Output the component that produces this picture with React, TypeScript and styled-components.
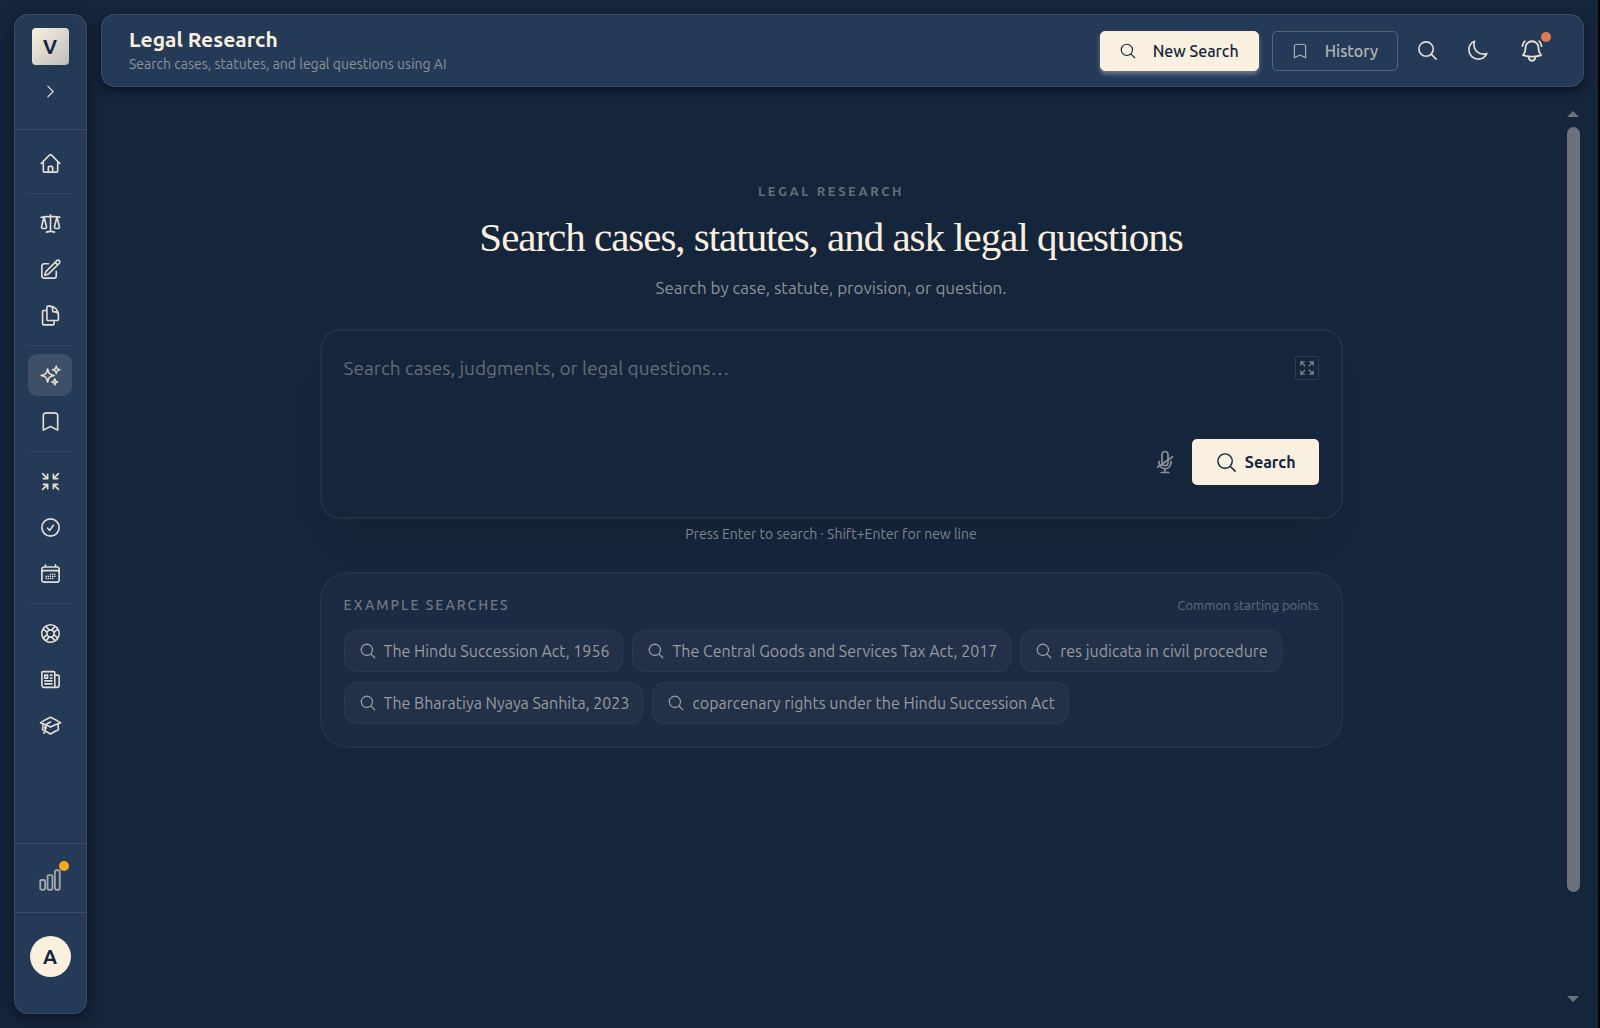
import React, { useState } from "react";
import styled, { createGlobalStyle, css } from "styled-components";
import {
  HiOutlineAcademicCap,
  HiOutlineArrowsPointingIn,
  HiOutlineArrowsPointingOut,
  HiOutlineBellAlert,
  HiOutlineBookmark,
  HiOutlineCalendarDays,
  HiOutlineChartBar,
  HiOutlineCheckCircle,
  HiOutlineChevronRight,
  HiOutlineDocumentDuplicate,
  HiOutlineHome,
  HiOutlineLifebuoy,
  HiOutlineMagnifyingGlass,
  HiOutlineMoon,
  HiOutlineNewspaper,
  HiOutlinePencilSquare,
  HiOutlineScale,
  HiOutlineSparkles,
} from "react-icons/hi2";

const color = {
  page: "#15253b",
  panel: "#253a57",
  cream: "#faf0e0",
  ink: "#16253b",
  line: "rgba(250, 240, 224, 0.1)",
  icon: "#e4dfd5",
  muted: "#8d929a",
  faint: "#646d79",
};

const GlobalStyle = createGlobalStyle`
  *, *::before, *::after { box-sizing: border-box; }
  body {
    margin: 0;
    background: ${color.page};
    color: ${color.cream};
    font-family: Ubuntu, "Noto Sans", "Open Sans", sans-serif;
    font-size: 16px;
  }
  button, textarea { font: inherit; color: inherit; }
  h1, h2, h3, p, ul { margin: 0; padding: 0; }
`;

const Shell = styled.div`
  display: flex;
  gap: 14px;
  height: 100vh;
  padding: 14px;
  border-right: 2px solid #000;
`;

const panel = css`
  background: ${color.panel};
  border: 1px solid ${color.line};
  border-radius: 14px;
`;

const Sidebar = styled.aside`
  ${panel}
  display: flex;
  flex-direction: column;
  flex: none;
  width: 73px;
  box-shadow: 0 4px 14px rgba(5, 10, 24, 0.6);
`;

const SidebarTop = styled.div`
  display: flex;
  flex-direction: column;
  align-items: center;
  gap: 12px;
  padding: 13px 1px 24px 0;
  border-bottom: 1px solid ${color.line};
`;

const Logo = styled.a`
  display: grid;
  place-items: center;
  width: 37px;
  height: 37px;
  border-radius: 4px;
  background: linear-gradient(135deg, ${color.cream}, #bdbdba);
  color: ${color.ink};
  font-size: 20px;
  font-weight: 600;
  line-height: 1;
  text-decoration: none;
`;

const PlainButton = styled.button<{ $size: number; $glyph: number; $tone?: string }>`
  position: relative;
  display: grid;
  place-items: center;
  width: ${(p) => p.$size}px;
  height: ${(p) => p.$size}px;
  padding: 0;
  border: 0;
  background: none;
  color: ${(p) => p.$tone ?? color.icon};
  cursor: pointer;

  svg {
    width: ${(p) => p.$glyph}px;
    height: ${(p) => p.$glyph}px;
    stroke-width: 1.7;
  }
`;

const Nav = styled.nav`
  display: flex;
  flex: 1;
  flex-direction: column;
  padding: 12px 14px 12px 13px;
`;

const NavGroup = styled.ul`
  display: flex;
  flex-direction: column;
  gap: 4px;
  list-style: none;

  & + & {
    margin-top: 9px;
    padding-top: 8px;
    border-top: 1px solid rgba(250, 240, 224, 0.07);
  }
`;

const NavLink = styled.a<{ $active: boolean }>`
  display: grid;
  place-items: center;
  height: 42px;
  border-radius: 9px;
  color: ${color.icon};
  background: ${(p) => (p.$active ? "rgba(250, 240, 224, 0.12)" : "none")};

  svg {
    width: 23px;
    height: 23px;
    stroke-width: 1.7;
  }
`;

const SidebarFoot = styled.div`
  display: grid;
  place-items: center;
  height: 69px;
  padding: 4px 2px 0 0;
  border-top: 1px solid ${color.line};
`;

const AccountFoot = styled(SidebarFoot)`
  height: 101px;
  padding: 0 1px 14px 0;
`;

const Dot = styled.span<{ $tone: string }>`
  position: absolute;
  top: 2px;
  right: 2px;
  width: 10px;
  height: 10px;
  border-radius: 50%;
  background: ${(p) => p.$tone};
`;

const Avatar = styled.button`
  width: 41px;
  height: 41px;
  padding: 0;
  border: 0;
  border-radius: 50%;
  background: ${color.cream};
  color: ${color.ink};
  font-size: 20px;
  font-weight: 600;
`;

const Column = styled.div`
  display: flex;
  flex: 1;
  flex-direction: column;
  min-width: 0;
`;

const Header = styled.header`
  ${panel}
  display: flex;
  align-items: center;
  justify-content: space-between;
  height: 73px;
  padding: 0 29px 0 27px;
  box-shadow: 0 4px 10px rgba(5, 10, 24, 0.6);
`;

const Title = styled.h1`
  font-size: 21px;
  font-weight: 600;
  line-height: 26px;
`;

const Tagline = styled.p`
  color: ${color.muted};
  font-size: 14px;
  line-height: 24px;
`;

const Actions = styled.div`
  display: flex;
  align-items: center;
  gap: 13px;
`;

const HeaderButton = styled.button<{ $primary?: boolean }>`
  display: flex;
  align-items: center;
  gap: 16px;
  height: 40px;
  padding: 0 19px 0 18px;
  border: 1px solid rgba(250, 240, 224, 0.22);
  border-radius: 5px;
  background: none;
  color: #b3b4b5;
  font-weight: 500;
  cursor: pointer;

  svg {
    width: 18px;
    height: 18px;
  }

  ${(p) =>
    p.$primary &&
    css`
      border-color: ${color.cream};
      background: ${color.cream};
      color: ${color.ink};
      box-shadow: 0 3px 4px rgba(250, 240, 224, 0.35);
    `}
`;

const IconBar = styled.div`
  display: flex;
  align-items: center;
  gap: 18px;
  padding-right: 1px;
`;

const Scroller = styled.div`
  display: flex;
  flex: 1;
  min-height: 0;
  padding: 24px 4px 0 0;
`;

const Content = styled.main`
  display: flex;
  flex: 1;
  flex-direction: column;
  align-items: center;
  padding: 70px 29px 0 24px;
`;

const Rail = styled.div`
  display: flex;
  flex-direction: column;
  align-items: center;
  width: 14px;
  padding-bottom: 12px;
  color: #6b727c;
`;

const Arrow = styled.span<{ $down?: boolean }>`
  width: 0;
  border: 6px solid transparent;
  border-top-width: ${(p) => (p.$down ? 6 : 0)}px;
  border-bottom-width: ${(p) => (p.$down ? 0 : 6)}px;
  border-${(p) => (p.$down ? "top" : "bottom")}-color: currentColor;
`;

const Track = styled.div`
  flex: 1;
  width: 13px;
  margin: 10px 0 9px;
`;

const Thumb = styled.div`
  height: 89%;
  border-radius: 7px;
  background: #6b727c;
`;

const Eyebrow = styled.p`
  color: ${color.faint};
  font-size: 13px;
  font-weight: 600;
  letter-spacing: 0.2em;
  line-height: 20px;
  text-transform: uppercase;
`;

const Headline = styled.h2`
  margin-top: 9px;
  font-family: "Liberation Serif", serif;
  font-size: 41px;
  font-weight: 400;
  letter-spacing: -0.025em;
  line-height: 54px;
`;

const Lead = styled.p`
  margin-top: 11px;
  color: ${color.muted};
  font-size: 17px;
  line-height: 26px;
`;

const SearchCard = styled.form`
  display: flex;
  flex-direction: column;
  width: 100%;
  max-width: 1023px;
  height: 190px;
  margin-top: 28px;
  padding: 25px 22px 32px;
  border: 2px solid rgba(250, 240, 224, 0.06);
  border-radius: 20px;
  box-shadow: 0 28px 28px -24px rgba(16, 32, 46, 0.6);
`;

const Row = styled.div`
  display: flex;
  align-items: flex-start;
  justify-content: space-between;
  flex: 1;
`;

const Query = styled.textarea`
  flex: 1;
  height: 72px;
  padding: 0;
  border: 0;
  outline: 0;
  background: none;
  resize: none;
  font-size: 19px;
  line-height: 24px;

  &::placeholder {
    color: ${color.faint};
    opacity: 1;
  }
`;

const ExpandButton = styled(PlainButton)`
  border: 1px solid rgba(250, 240, 224, 0.12);
  border-radius: 2px;
`;

const Submit = styled.div`
  display: flex;
  align-items: center;
  justify-content: flex-end;
  gap: 15px;
`;

const SearchButton = styled.button`
  display: flex;
  align-items: center;
  gap: 7px;
  height: 46px;
  padding: 0 23px;
  border: 0;
  border-radius: 5px;
  background: ${color.cream};
  color: ${color.ink};
  font-size: 16px;
  font-weight: 600;

  svg {
    width: 23px;
    height: 23px;
  }
`;

const Hint = styled.p`
  margin-top: 4px;
  color: #7f858e;
  font-size: 14px;
  line-height: 22px;
`;

const Examples = styled.section`
  width: 100%;
  max-width: 1023px;
  margin-top: 27px;
  padding: 21px 23px 23px;
  border: 1px solid rgba(250, 240, 224, 0.06);
  border-radius: 28px;
  background: #1a2b43;
`;

const ExamplesHead = styled.div`
  display: flex;
  align-items: center;
  justify-content: space-between;
  color: ${color.faint};
  font-size: 13px;
  line-height: 22px;
`;

const ExamplesTitle = styled.h3`
  color: #727984;
  font-size: 14px;
  font-weight: 500;
  letter-spacing: 0.14em;
  text-transform: uppercase;
`;

const Chips = styled.div`
  display: flex;
  flex-wrap: wrap;
  gap: 10px 9px;
  margin-top: 14px;
`;

const Chip = styled.button`
  display: flex;
  align-items: center;
  gap: 7px;
  height: 42px;
  padding: 0 13px 0 14px;
  border: 1px solid rgba(250, 240, 224, 0.05);
  border-radius: 13px;
  background: #223048;
  color: #989ba0;
  font-size: 16px;
  cursor: pointer;

  svg {
    width: 18px;
    height: 18px;
    stroke-width: 1.7;
  }
`;

/* Microphone with a slash through it: voice input is off. */
const MicOff = () => (
  <svg viewBox="0 0 24 24" fill="none" stroke="currentColor" strokeLinecap="round" strokeLinejoin="round" aria-hidden="true">
    <path d="M12 18.75a6 6 0 0 0 6-6v-1.5m-6 7.5a6 6 0 0 1-6-6v-1.5m6 7.5v3.75m-3.75 0h7.5M12 15.75a3 3 0 0 1-3-3V4.5a3 3 0 1 1 6 0v8.25a3 3 0 0 1-3 3Z" />
    <path d="M4.5 17.25 19.5 6.75" />
  </svg>
);

const navGroups = [
  [{ label: "Home", Icon: HiOutlineHome }],
  [
    { label: "Cases", Icon: HiOutlineScale },
    { label: "Drafting", Icon: HiOutlinePencilSquare },
    { label: "Documents", Icon: HiOutlineDocumentDuplicate },
  ],
  [
    { label: "Legal Research", Icon: HiOutlineSparkles },
    { label: "Saved", Icon: HiOutlineBookmark },
  ],
  [
    { label: "Summaries", Icon: HiOutlineArrowsPointingIn },
    { label: "Tasks", Icon: HiOutlineCheckCircle },
    { label: "Calendar", Icon: HiOutlineCalendarDays },
  ],
  [
    { label: "Support", Icon: HiOutlineLifebuoy },
    { label: "News", Icon: HiOutlineNewspaper },
    { label: "Learning", Icon: HiOutlineAcademicCap },
  ],
];

const examples = [
  "The Hindu Succession Act, 1956",
  "The Central Goods and Services Tax Act, 2017",
  "res judicata in civil procedure",
  "The Bharatiya Nyaya Sanhita, 2023",
  "coparcenary rights under the Hindu Succession Act",
];

export default function App() {
  const [query, setQuery] = useState("");

  return (
    <>
      <GlobalStyle />
      <Shell>
        <Sidebar>
          <SidebarTop>
            <Logo href="#">V</Logo>
            <PlainButton $size={28} $glyph={17} aria-label="Expand sidebar">
              <HiOutlineChevronRight />
            </PlainButton>
          </SidebarTop>
          <Nav aria-label="Main">
            {navGroups.map((group) => (
              <NavGroup key={group[0].label}>
                {group.map(({ label, Icon }) => (
                  <li key={label}>
                    <NavLink href="#" aria-label={label} $active={label === "Legal Research"}>
                      <Icon />
                    </NavLink>
                  </li>
                ))}
              </NavGroup>
            ))}
          </Nav>
          <SidebarFoot>
            <PlainButton $size={42} $glyph={26} $tone="#a3a7ac" aria-label="Usage">
              <HiOutlineChartBar />
              <Dot $tone="#f9a825" />
            </PlainButton>
          </SidebarFoot>
          <AccountFoot>
            <Avatar>A</Avatar>
          </AccountFoot>
        </Sidebar>

        <Column>
          <Header>
            <div>
              <Title>Legal Research</Title>
              <Tagline>Search cases, statutes, and legal questions using AI</Tagline>
            </div>
            <Actions>
              <HeaderButton $primary>
                <HiOutlineMagnifyingGlass />
                New Search
              </HeaderButton>
              <HeaderButton>
                <HiOutlineBookmark />
                History
              </HeaderButton>
              <IconBar>
                <PlainButton $size={32} $glyph={23} aria-label="Search">
                  <HiOutlineMagnifyingGlass />
                </PlainButton>
                <PlainButton $size={32} $glyph={23} aria-label="Dark mode">
                  <HiOutlineMoon />
                </PlainButton>
                <PlainButton $size={42} $glyph={26} aria-label="Notifications">
                  <HiOutlineBellAlert />
                  <Dot $tone="#de7953" />
                </PlainButton>
              </IconBar>
            </Actions>
          </Header>

          <Scroller>
            <Content>
              <Eyebrow>Legal Research</Eyebrow>
              <Headline>Search cases, statutes, and ask legal questions</Headline>
              <Lead>Search by case, statute, provision, or question.</Lead>

              <SearchCard onSubmit={(e) => e.preventDefault()}>
                <Row>
                  <Query
                    aria-label="Search query"
                    placeholder="Search cases, judgments, or legal questions…"
                    value={query}
                    onChange={(e) => setQuery(e.target.value)}
                  />
                  <ExpandButton type="button" $size={24} $glyph={18} $tone="#7d838c" aria-label="Expand">
                    <HiOutlineArrowsPointingOut />
                  </ExpandButton>
                </Row>
                <Submit>
                  <PlainButton type="button" $size={24} $glyph={24} $tone={color.muted} aria-label="Voice input">
                    <MicOff />
                  </PlainButton>
                  <SearchButton type="submit">
                    <HiOutlineMagnifyingGlass />
                    Search
                  </SearchButton>
                </Submit>
              </SearchCard>
              <Hint>Press Enter to search · Shift+Enter for new line</Hint>

              <Examples>
                <ExamplesHead>
                  <ExamplesTitle>Example searches</ExamplesTitle>
                  <span>Common starting points</span>
                </ExamplesHead>
                <Chips>
                  {examples.map((text) => (
                    <Chip key={text} type="button" onClick={() => setQuery(text)}>
                      <HiOutlineMagnifyingGlass />
                      {text}
                    </Chip>
                  ))}
                </Chips>
              </Examples>
            </Content>
            <Rail aria-hidden="true">
              <Arrow />
              <Track>
                <Thumb />
              </Track>
              <Arrow $down />
            </Rail>
          </Scroller>
        </Column>
      </Shell>
    </>
  );
}
